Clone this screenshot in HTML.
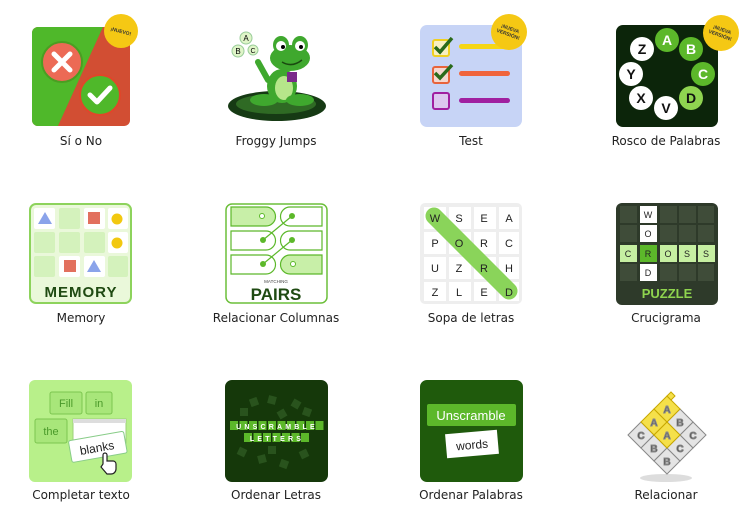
<!DOCTYPE html>
<html><head><meta charset="utf-8"><style>
html,body{margin:0;padding:0;background:#fff;}
svg{display:block;}
.lb{font-family:"DejaVu Sans","Liberation Sans",sans-serif;font-size:12px;fill:#222;text-anchor:middle;}
.s{font-family:"Liberation Sans",sans-serif;}
</style></head><body>
<svg width="743" height="526" viewBox="0 0 743 526" xmlns="http://www.w3.org/2000/svg">
<defs>
<clipPath id="c1"><rect x="32" y="27" width="98" height="99" rx="6"/></clipPath>
</defs>
<!-- Si o No -->
<g clip-path="url(#c1)">
<rect x="32" y="27" width="98" height="99" fill="#c8442a"/>
<polygon points="32,27 103,27 58,126 32,126" fill="#4fb82a"/>
<polygon points="103,27 130,27 130,126 58,126" fill="#d9553a" opacity=".6"/>
</g>
<circle cx="62" cy="62" r="20" fill="#ec6a55" stroke="#4a9e22" stroke-width="2"/>
<path d="M54 54 L70 70 M70 54 L54 70" stroke="#fff" stroke-width="5" stroke-linecap="round"/>
<circle cx="100" cy="95" r="20" fill="#4fb82a" stroke="#e0462a" stroke-width="2"/>
<path d="M90 95 L97 102 L110 88" stroke="#fff" stroke-width="5" fill="none" stroke-linecap="round" stroke-linejoin="round"/>
<circle cx="121" cy="31" r="17" fill="#f5c814"/>
<text x="121" y="33" class="s" font-size="5" font-weight="bold" text-anchor="middle" transform="rotate(15 121 31)" fill="#333">¡NUEVO!</text>
<text x="81" y="145" class="lb">Sí o No</text>

<!-- Froggy -->
<ellipse cx="277" cy="106" rx="49" ry="15" fill="#163a14"/>
<ellipse cx="276" cy="104" rx="40" ry="10" fill="#2f6a24"/>
<ellipse cx="282" cy="86" rx="15" ry="17" fill="#3fa82e"/>
<ellipse cx="284" cy="88" rx="9" ry="12" fill="#b6e68a"/>
<ellipse cx="264" cy="100" rx="14" ry="6" fill="#3fa82e"/>
<ellipse cx="300" cy="100" rx="14" ry="6" fill="#3fa82e"/>
<ellipse cx="290" cy="58" rx="20" ry="13" fill="#3fa82e"/>
<ellipse cx="281" cy="45" rx="8" ry="9" fill="#3fa82e"/>
<ellipse cx="300" cy="45" rx="8" ry="9" fill="#3fa82e"/>
<circle cx="281" cy="46" r="5" fill="#fff"/><circle cx="300" cy="46" r="5" fill="#fff"/>
<circle cx="283" cy="47" r="2" fill="#000"/><circle cx="301" cy="47" r="2" fill="#000"/>
<path d="M282 62 Q292 68 302 60" stroke="#1a4a10" stroke-width="1.5" fill="none"/>
<path d="M268 80 L258 62" stroke="#3fa82e" stroke-width="6" stroke-linecap="round"/>
<rect x="287" y="72" width="10" height="10" fill="#7a2a8a"/>
<circle cx="246" cy="38" r="6" fill="#dff5c8" stroke="#9c9"/><text x="246" y="41" class="s" font-size="8" text-anchor="middle">A</text>
<circle cx="238" cy="51" r="6" fill="#dff5c8" stroke="#9c9"/><text x="238" y="54" class="s" font-size="8" text-anchor="middle">B</text>
<circle cx="253" cy="50" r="5" fill="#dff5c8" stroke="#9c9"/><text x="253" y="53" class="s" font-size="7" text-anchor="middle">C</text>
<text x="276" y="145" class="lb">Froggy Jumps</text>

<!-- Test -->
<rect x="420" y="25" width="102" height="102" rx="7" fill="#c7d4f6"/>
<rect x="433" y="40" width="16" height="16" rx="2" fill="#f8f0c0" stroke="#f0d020" stroke-width="2"/>
<path d="M435 47 L440 52 L452 38" stroke="#2a6a1a" stroke-width="3.5" fill="none"/>
<rect x="459" y="44" width="48" height="5" rx="2.5" fill="#f5d615"/>
<rect x="433" y="67" width="16" height="16" rx="2" fill="#f4d8d0" stroke="#e8643c" stroke-width="2"/>
<path d="M435 73 L440 78 L452 65" stroke="#2a6a1a" stroke-width="3.5" fill="none"/>
<rect x="459" y="71" width="51" height="5" rx="2.5" fill="#f0643c"/>
<rect x="433" y="93" width="16" height="16" rx="2" fill="#dcc8f0" stroke="#a020a0" stroke-width="2"/>
<rect x="459" y="98" width="51" height="5" rx="2.5" fill="#a020a0"/>
<circle cx="509" cy="32" r="18" fill="#f5c814"/>
<text x="509" y="30" class="s" font-size="5" font-weight="bold" text-anchor="middle" transform="rotate(20 509 32)" fill="#333">¡NUEVA</text>
<text x="509" y="36" class="s" font-size="5" font-weight="bold" text-anchor="middle" transform="rotate(20 509 32)" fill="#333">VERSIÓN!</text>
<text x="471" y="145" class="lb">Test</text>

<!-- Rosco -->
<rect x="616" y="25" width="102" height="102" rx="7" fill="#0c250a"/>
<g class="s" font-size="14" text-anchor="middle" font-weight="bold">
<circle cx="667" cy="40" r="12" fill="#5cb82a"/><text x="667" y="45" fill="#fff">A</text>
<circle cx="691" cy="49" r="12" fill="#5cb82a"/><text x="691" y="54" fill="#fff">B</text>
<circle cx="703" cy="74" r="12" fill="#5cb82a"/><text x="703" y="79" fill="#fff">C</text>
<circle cx="691" cy="98" r="12" fill="#8fd450"/><text x="691" y="103" fill="#111">D</text>
<circle cx="666" cy="108" r="12" fill="#fff"/><text x="666" y="113" fill="#111">V</text>
<circle cx="641" cy="98" r="12" fill="#fff"/><text x="641" y="103" fill="#111">X</text>
<circle cx="631" cy="74" r="12" fill="#fff"/><text x="631" y="79" fill="#111">Y</text>
<circle cx="642" cy="49" r="12" fill="#fff"/><text x="642" y="54" fill="#111">Z</text>
</g>
<circle cx="721" cy="33" r="18" fill="#f5c814"/>
<text x="721" y="31" class="s" font-size="5" font-weight="bold" text-anchor="middle" transform="rotate(20 721 33)" fill="#333">¡NUEVA</text>
<text x="721" y="37" class="s" font-size="5" font-weight="bold" text-anchor="middle" transform="rotate(20 721 33)" fill="#333">VERSIÓN!</text>
<text x="666" y="145" class="lb">Rosco de Palabras</text>

<!-- Memory -->
<rect x="30" y="204" width="101" height="99" rx="6" fill="#eaf8da" stroke="#8dd35c" stroke-width="2"/>
<g fill="#d4f2bc">
<rect x="34" y="208" width="21" height="21" rx="2" fill="#fff"/><rect x="59" y="208" width="21" height="21" rx="2"/><rect x="84" y="208" width="21" height="21" rx="2" fill="#fff"/><rect x="108" y="208" width="20" height="21" rx="2" fill="#fff"/>
<rect x="34" y="232" width="21" height="21" rx="2"/><rect x="59" y="232" width="21" height="21" rx="2"/><rect x="84" y="232" width="21" height="21" rx="2"/><rect x="108" y="232" width="20" height="21" rx="2" fill="#fff"/>
<rect x="34" y="256" width="21" height="21" rx="2"/><rect x="59" y="256" width="21" height="21" rx="2" fill="#fff"/><rect x="84" y="256" width="21" height="21" rx="2" fill="#fff"/><rect x="108" y="256" width="20" height="21" rx="2"/>
</g>
<polygon points="45,212 52,224 38,224" fill="#8aa3ea"/>
<rect x="88" y="212" width="12" height="12" fill="#e2705e"/>
<circle cx="117" cy="219" r="5.5" fill="#f2c80f"/>
<circle cx="117" cy="243" r="5.5" fill="#f2c80f"/>
<rect x="64" y="260" width="12" height="12" fill="#e2705e"/>
<polygon points="94,260 101,272 87,272" fill="#8aa3ea"/>
<text x="81" y="297" class="s" font-size="15" font-weight="bold" text-anchor="middle" fill="#1f4a12" letter-spacing="1">MEMORY</text>
<text x="81" y="322" class="lb">Memory</text>

<!-- Pairs -->
<rect x="226" y="204" width="101" height="99" rx="6" fill="#fff" stroke="#6cbf3a" stroke-width="1.5"/>
<g stroke="#5cb82a" stroke-width="1.2">
<path d="M231 207 H266 A9 9 0 0 1 266 226 H231 Z" fill="#c8efa8"/>
<path d="M231 231 H266 A9 9 0 0 1 266 250 H231 Z" fill="#fff"/>
<path d="M231 255 H266 A9 9 0 0 1 266 274 H231 Z" fill="#fff"/>
<path d="M322 207 H290 A9 9 0 0 0 290 226 H322 Z" fill="#fff"/>
<path d="M322 231 H290 A9 9 0 0 0 290 250 H322 Z" fill="#fff"/>
<path d="M322 255 H290 A9 9 0 0 0 290 274 H322 Z" fill="#c8efa8"/>
<path d="M263 240 L292 216 M263 264 L292 240" fill="none"/>
</g>
<g fill="#5cb82a"><circle cx="263" cy="240" r="3"/><circle cx="263" cy="264" r="3"/><circle cx="292" cy="216" r="3"/><circle cx="292" cy="240" r="3"/></g>
<circle cx="262" cy="216" r="2.5" fill="#fff" stroke="#5cb82a"/><circle cx="293" cy="264" r="2.5" fill="#fff" stroke="#5cb82a"/>
<text x="276" y="283" class="s" font-size="4.5" text-anchor="middle" fill="#444">MATCHING</text>
<text x="276" y="300" class="s" font-size="17" font-weight="bold" text-anchor="middle" fill="#1f4a12">PAIRS</text>
<text x="276" y="322" class="lb">Relacionar Columnas</text>

<!-- Sopa -->
<rect x="420" y="203" width="102" height="101" rx="5" fill="#eeeeee"/>
<g fill="#fff">
<rect x="424" y="207" width="22" height="22"/><rect x="449" y="207" width="22" height="22"/><rect x="474" y="207" width="22" height="22"/><rect x="499" y="207" width="20" height="22"/>
<rect x="424" y="232" width="22" height="22"/><rect x="449" y="232" width="22" height="22"/><rect x="474" y="232" width="22" height="22"/><rect x="499" y="232" width="20" height="22"/>
<rect x="424" y="257" width="22" height="22"/><rect x="449" y="257" width="22" height="22"/><rect x="474" y="257" width="22" height="22"/><rect x="499" y="257" width="20" height="22"/>
<rect x="424" y="282" width="22" height="19"/><rect x="449" y="282" width="22" height="19"/><rect x="474" y="282" width="22" height="19"/><rect x="499" y="282" width="20" height="19"/>
</g>
<path d="M434 216 L509 291" stroke="#8ad45a" stroke-width="17" stroke-linecap="round"/>
<g class="s" font-size="11" text-anchor="middle" fill="#222">
<text x="435" y="222">W</text><text x="459" y="222">S</text><text x="484" y="222">E</text><text x="509" y="222">A</text>
<text x="435" y="247">P</text><text x="459" y="247">O</text><text x="484" y="247">R</text><text x="509" y="247">C</text>
<text x="435" y="272">U</text><text x="459" y="272">Z</text><text x="484" y="272">R</text><text x="509" y="272">H</text>
<text x="435" y="296">Z</text><text x="459" y="296">L</text><text x="484" y="296">E</text><text x="509" y="296">D</text>
</g>
<text x="471" y="322" class="lb">Sopa de letras</text>

<!-- Crucigrama -->
<rect x="616" y="203" width="102" height="102" rx="6" fill="#2e3a2a"/>
<g fill="#3f4c39">
<rect x="620" y="206" width="17" height="17"/><rect x="660" y="206" width="17" height="17"/><rect x="679" y="206" width="17" height="17"/><rect x="698" y="206" width="16" height="17"/>
<rect x="620" y="225" width="17" height="17"/><rect x="660" y="225" width="17" height="17"/><rect x="679" y="225" width="17" height="17"/><rect x="698" y="225" width="16" height="17"/>
<rect x="620" y="264" width="17" height="17"/><rect x="660" y="264" width="17" height="17"/><rect x="679" y="264" width="17" height="17"/><rect x="698" y="264" width="16" height="17"/>
</g>
<g fill="#fff"><rect x="640" y="206" width="17" height="17"/><rect x="640" y="225" width="17" height="17"/><rect x="640" y="264" width="17" height="17"/></g>
<g fill="#c6efa2"><rect x="620" y="245" width="17" height="17"/><rect x="660" y="245" width="17" height="17"/><rect x="679" y="245" width="17" height="17"/><rect x="698" y="245" width="17" height="17"/></g>
<rect x="640" y="245" width="17" height="17" fill="#5cb82a"/>
<g class="s" font-size="9" text-anchor="middle" fill="#222">
<text x="648" y="218">W</text><text x="648" y="237">O</text><text x="628" y="257">C</text><text x="648" y="257">R</text><text x="668" y="257">O</text><text x="687" y="257">S</text><text x="706" y="257">S</text><text x="648" y="276">D</text>
</g>
<text x="667" y="298" class="s" font-size="13" font-weight="bold" text-anchor="middle" fill="#8fd44e">PUZZLE</text>
<text x="666" y="322" class="lb">Crucigrama</text>

<!-- Completar -->
<rect x="29" y="380" width="103" height="102" rx="6" fill="#b8f08a"/>
<g fill="#a8e67a" stroke="#7cc650" stroke-width="1">
<rect x="50" y="392" width="32" height="22" rx="2"/><rect x="86" y="392" width="26" height="22" rx="2"/>
<rect x="35" y="419" width="32" height="24" rx="2"/>
</g>
<rect x="73" y="419" width="53" height="24" fill="#fff" stroke="#9ccf7a"/>
<rect x="73" y="419" width="53" height="4" fill="#ddd"/>
<g class="s" font-size="11" fill="#4a9a2a" text-anchor="middle"><text x="66" y="407">Fill</text><text x="99" y="407">in</text><text x="51" y="435">the</text></g>
<g transform="rotate(-10 97 448)"><rect x="70" y="436" width="56" height="22" rx="2" fill="#fff" stroke="#8c8" /><text x="97" y="452" class="s" font-size="12" text-anchor="middle" fill="#222">blanks</text></g>
<path d="M103 464 v-9 a2 2 0 0 1 4 0 v6 h6 a3 3 0 0 1 3 3 v5 a5 5 0 0 1 -5 5 h-4 l-6 -7 z" fill="#fff" stroke="#222" stroke-width="1.2"/>
<text x="81" y="499" class="lb">Completar texto</text>

<!-- Ordenar Letras -->
<rect x="225" y="380" width="103" height="102" rx="7" fill="#15380a"/>
<g fill="#2e5a22" opacity=".8">
<rect x="250" y="398" width="8" height="8" transform="rotate(-20 254 402)"/><rect x="268" y="396" width="8" height="8" transform="rotate(15 272 400)"/><rect x="292" y="400" width="8" height="8" transform="rotate(30 296 404)"/><rect x="240" y="408" width="8" height="8"/><rect x="278" y="410" width="8" height="8" transform="rotate(-30 282 414)"/><rect x="303" y="408" width="8" height="8" transform="rotate(20 307 412)"/>
<rect x="238" y="448" width="8" height="8" transform="rotate(25 242 452)"/><rect x="258" y="455" width="8" height="8" transform="rotate(-15 262 459)"/><rect x="280" y="460" width="8" height="8" transform="rotate(20 284 464)"/><rect x="300" y="450" width="8" height="8" transform="rotate(-25 304 454)"/><rect x="268" y="446" width="8" height="8"/>
</g>
<g fill="#5cb82a">
<rect x="230" y="421" width="8" height="9"/><rect x="239.5" y="421" width="8" height="9"/><rect x="249" y="421" width="8" height="9"/><rect x="258.5" y="421" width="8" height="9"/><rect x="268" y="421" width="8" height="9"/><rect x="277.5" y="421" width="8" height="9"/><rect x="287" y="421" width="8" height="9"/><rect x="296.5" y="421" width="8" height="9"/><rect x="306" y="421" width="8" height="9"/><rect x="315.5" y="421" width="8" height="9"/>
<rect x="244" y="433" width="8" height="9"/><rect x="253.5" y="433" width="8" height="9"/><rect x="263" y="433" width="8" height="9"/><rect x="272.5" y="433" width="8" height="9"/><rect x="282" y="433" width="8" height="9"/><rect x="291.5" y="433" width="8" height="9"/><rect x="301" y="433" width="8" height="9"/>
</g>
<text x="277" y="429" class="s" font-size="7" font-weight="bold" fill="#fff" text-anchor="middle" letter-spacing="3.2">UNSCRAMBLE</text>
<text x="277" y="441" class="s" font-size="7" font-weight="bold" fill="#fff" text-anchor="middle" letter-spacing="3.2">LETTERS</text>
<text x="276" y="499" class="lb">Ordenar Letras</text>

<!-- Ordenar Palabras -->
<rect x="420" y="380" width="103" height="102" rx="7" fill="#1f5a0c"/>
<rect x="427" y="404" width="89" height="22" rx="2" fill="#5cb82a"/>
<text x="471" y="420" class="s" font-size="13" text-anchor="middle" fill="#fff">Unscramble</text>
<g transform="rotate(-5 472 444)"><rect x="446" y="432" width="52" height="24" fill="#fff"/><text x="472" y="449" class="s" font-size="12" text-anchor="middle" fill="#222">words</text></g>
<text x="471" y="499" class="lb">Ordenar Palabras</text>

<!-- Relacionar -->
<ellipse cx="666" cy="478" rx="26" ry="4" fill="#ddd"/>
<g stroke="#888" stroke-width="1" class="s" font-size="10" font-weight="bold" text-anchor="middle">
<polygon points="628,435 641,422 654,435 641,448" fill="#e4e4e4"/><text x="641" y="439" fill="#333">C</text>
<polygon points="641,448 654,435 667,448 654,461" fill="#e4e4e4"/><text x="654" y="452" fill="#333">B</text>
<polygon points="654,461 667,448 680,461 667,474" fill="#e4e4e4"/><text x="667" y="465" fill="#333">B</text>
<polygon points="680,435 693,422 706,435 693,448" fill="#e4e4e4"/><text x="693" y="439" fill="#333">C</text>
<polygon points="667,448 680,435 693,448 680,461" fill="#e4e4e4"/><text x="680" y="452" fill="#333">C</text>
<polygon points="667,422 680,409 693,422 680,435" fill="#e4e4e4"/><text x="680" y="426" fill="#333">B</text>
<polygon points="641,422 654,409 667,422 654,435" fill="#f5e04a" stroke="#c8a800"/><text x="654" y="426" fill="#333">A</text>
<polygon points="654,435 667,422 680,435 667,448" fill="#f5e04a" stroke="#c8a800"/><text x="667" y="439" fill="#333">A</text>
<polygon points="654,409 667,396 680,409 667,422" fill="#f5e04a" stroke="#c8a800"/><text x="667" y="413" fill="#333">A</text>
<polygon points="667,396 671,392 675,396 671,400" fill="#f5e04a" stroke="#c8a800"/>
</g>
<text x="666" y="499" class="lb">Relacionar</text>
</svg>
</body></html>
